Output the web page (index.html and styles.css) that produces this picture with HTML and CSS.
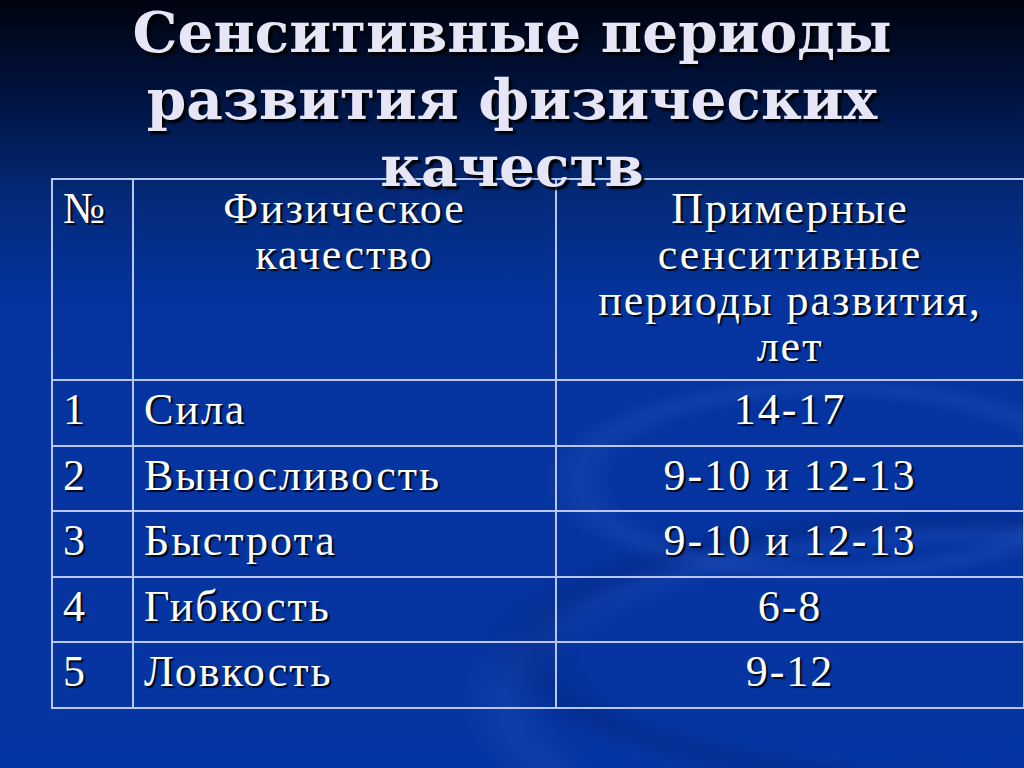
FILE: index.html
```html
<!DOCTYPE html>
<html lang="ru">
<head>
<meta charset="utf-8">
<title>Сенситивные периоды развития физических качеств</title>
<link rel="stylesheet" href="styles.css">
</head>
<body>
<div class="slide">
  <h1 class="title">Сенситивные периоды<br>развития физических<br>качеств</h1>
  <table class="grid">
    <colgroup>
      <col class="c1"><col class="c2"><col class="c3">
    </colgroup>
    <tr class="head">
      <td class="num">№</td>
      <td class="center">Физическое<br>качество</td>
      <td class="center">Примерные<br>сенситивные<br>периоды развития,<br>лет</td>
    </tr>
    <tr class="row"><td class="num">1</td><td class="name">Сила</td><td class="center">14-17</td></tr>
    <tr class="row"><td class="num">2</td><td class="name">Выносливость</td><td class="center">9-10 и 12-13</td></tr>
    <tr class="row"><td class="num">3</td><td class="name">Быстрота</td><td class="center">9-10 и 12-13</td></tr>
    <tr class="row"><td class="num">4</td><td class="name">Гибкость</td><td class="center">6-8</td></tr>
    <tr class="row"><td class="num">5</td><td class="name">Ловкость</td><td class="center">9-12</td></tr>
  </table>
</div>
</body>
</html>
```
FILE: styles.css
```css
html, body {
  margin: 0;
  padding: 0;
}
body {
  width: 1024px;
  height: 768px;
  overflow: hidden;
}
.slide {
  position: relative;
  width: 1024px;
  height: 768px;
  overflow: hidden;
  background:
    radial-gradient(ellipse 300px 110px at 830px 480px, rgba(255,255,255,0) 72%, rgba(80,120,220,0.14) 84%, rgba(255,255,255,0) 96%),
    radial-gradient(ellipse 520px 150px at 980px 650px, rgba(0,0,0,0) 76%, rgba(0,20,90,0.22) 86%, rgba(0,0,0,0) 97%),
    radial-gradient(ellipse 560px 190px at 1000px 700px, rgba(0,0,0,0) 80%, rgba(90,130,230,0.10) 88%, rgba(0,0,0,0) 97%),
    linear-gradient(to bottom, #00030f 0%, #001442 13%, #042a7a 26%, #0534a0 40%, #0535a2 100%);
  padding-top: 1px;
  box-sizing: border-box;
}
.title {
  margin: -2px 0 -22px 0;
  font-family: "DejaVu Serif", "Liberation Serif", serif;
  font-weight: bold;
  font-size: 56.5px;
  line-height: 67px;
  text-align: center;
  color: #e6e6f6;
  text-shadow: 3px 3px 2px #000000;
  position: relative;
  z-index: 2;
}
.grid {
  margin-left: 51px;
  width: 972px;
  table-layout: fixed;
  border-collapse: collapse;
  font-family: "Liberation Serif", "Times New Roman", serif;
  font-size: 44px;
  letter-spacing: 2px;
  line-height: 46px;
  color: #ffffff;
  text-shadow: 2px 2px 1px rgba(0,0,0,0.85);
  position: relative;
  z-index: 1;
}
.c1 { width: 81px; }
.c2 { width: 423px; }
.c3 { width: 468px; }
.grid td {
  border: 2px solid #b9c6ee;
  vertical-align: top;
  padding: 6px 10px 0 10px;
  box-sizing: border-box;
}
.head td { height: 201px; }
.row td { height: 65.5px; }
.num { text-align: left; }
.name { padding-left: 12px; }
.center { text-align: center; }
```
